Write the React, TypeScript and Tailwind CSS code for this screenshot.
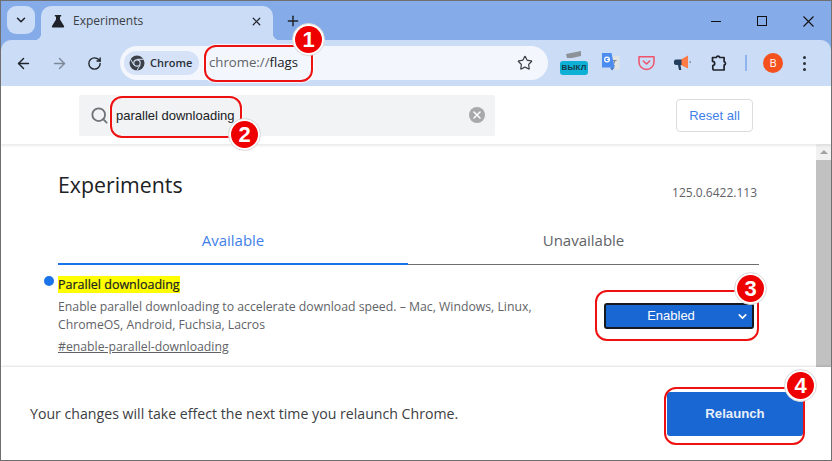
import { ArrowLeft, ArrowRight, RotateCw, Star, Search, Plus, X, ChevronDown } from "lucide-react";

const ui = "font-['Open_Sans','Noto_Sans',sans-serif]";

function Marker({ n, className }: { n: number; className: string }) {
  return (
    <div className={`absolute z-20 flex h-[33px] w-[33px] items-center justify-center rounded-full border-[1px] border-[#d8d8d8] bg-white ${className}`}>
      <div className="flex h-[27px] w-[27px] items-center justify-center rounded-full bg-[#ee0000] font-['Liberation_Sans',sans-serif] text-[22px] leading-none font-bold text-white">
        {n}
      </div>
    </div>
  );
}

function Callout({ className }: { className: string }) {
  return <div className={`absolute z-20 rounded-[12px] border-2 border-[#ee1111] shadow-[0_0_1px_1px_rgba(255,255,255,0.8)] ${className}`} />;
}

function Flask() {
  return (
    <svg width="14" height="14" viewBox="0 0 14 14" className="text-[#1f2329]">
      <path fill="currentColor" d="M3.800 1h6.400v1.400H9v3l4 6.500c.4.700 0 1.600-.9 1.600H1.900c-.9 0-1.300-.9-.9-1.600l4-6.500v-3H3.800z" />
    </svg>
  );
}

function ChromeLogo() {
  return (
    <svg width="16" height="16" viewBox="0 0 16 16">
      <circle cx="8" cy="8" r="7.5" fill="#3c4148" />
      <circle cx="8" cy="8" r="3.7" fill="#d5e2f8" />
      <circle cx="8" cy="8" r="2.6" fill="#3c4148" />
      <path d="M8 4.300h6.600M4.800 9.900 1.500 4.200M11.200 9.900l-3.300 5.700" stroke="#d5e2f8" strokeWidth="1" fill="none" />
    </svg>
  );
}

function VpnOff() {
  return (
    <div className="relative h-[24px] w-[28px]">
      <svg width="16" height="8" viewBox="0 0 16 8" className="absolute top-0 left-[6px]">
        <path fill="#8d9299" d="M0 3 15 0v5L6 7H1z" />
      </svg>
      <div className="absolute bottom-0 left-0 flex h-[14px] w-[28px] items-center justify-center rounded-[3px] bg-[#0fb0d6] font-['Liberation_Sans',sans-serif] text-[8px] leading-none font-bold tracking-[0.2px] text-[#123a4a]">
        ВЫКЛ
      </div>
    </div>
  );
}

function TranslateIcon() {
  return (
    <svg width="18" height="18" viewBox="0 0 18 18">
      <path fill="#dfe3e4" d="M7 3h10.500v13.500H9z" />
      <path fill="#7b8794" d="M10.500 7h4v1h-1.200c-.3 1.500-1 2.600-1.800 3.400l1.500 1-.5.800-1.800-1.200-1.200.9-.5-.8 1-.8-.8-1.400.8-.3.700 1.100c.7-.7 1.200-1.600 1.400-2.700h-1.600z" />
      <path fill="#4c8bf0" d="M0 0h9.500l3 14.500H0z" />
      <path fill="#3b6fc4" d="m8 14.500h4.500L10 17.500z" />
      <circle cx="5" cy="6.500" r="2.400" fill="none" stroke="#fff" strokeWidth="1.200" />
      <path fill="#fff" d="M5 6h3v1H5z" />
    </svg>
  );
}

function PocketIcon() {
  return (
    <svg width="17" height="16" viewBox="0 0 17 16" fill="none" stroke="#f0526a" strokeWidth="1.500">
      <path d="M1 1.800h15V7a7.500 7.500 0 0 1-15 0z" strokeLinejoin="round" />
      <path d="m5.300 6 3.200 3 3.200-3" strokeLinecap="round" strokeLinejoin="round" />
    </svg>
  );
}

function HornIcon() {
  return (
    <svg width="17" height="16" viewBox="0 0 17 16">
      <path fill="#ff7a45" d="M7 4.500 14 .5v13l-7-3.500z" />
      <path fill="#243f5e" d="M2.500 4.500H7.500V10H2.500a2.700 2.700 0 0 1 0-5.500z" />
      <path fill="#243f5e" d="M4 10h2.500l.8 5H5z" />
      <path fill="#555" d="M15.500 6.500h1.500v1h-1.500z" />
    </svg>
  );
}

function PuzzleIcon() {
  return (
    <svg width="17" height="17" viewBox="0 0 17 17" fill="none" stroke="#1f2329" strokeWidth="1.700" strokeLinejoin="round">
      <path d="M1.500 2.500H5.300a1.800 1.800 0 0 1 3.500 0h4.300v4.200a1.800 1.800 0 0 1 0 3.500v4.800H3.200c-.9 0-1.400-.6-1.400-1.400V10.500c1.700-.2 1.900-.8 1.900-2S3 6.300 1.500 6.300z" />
    </svg>
  );
}

function WindowButtons() {
  return (
    <div className="ml-auto flex h-[30px] text-[#111]">
      <div className="flex w-[46px] items-center justify-center">
        <div className="h-px w-[10px] bg-[#111]" />
      </div>
      <div className="flex w-[46px] items-center justify-center">
        <div className="h-[10px] w-[10px] border border-[#111]" />
      </div>
      <div className="flex w-[46px] items-center justify-center">
        <svg width="11" height="11" viewBox="0 0 11 11" stroke="currentColor" strokeWidth="1.100">
          <path d="m.5.5 10 10M10.500.5l-10 10" />
        </svg>
      </div>
    </div>
  );
}

function Tabstrip() {
  return (
    <div className="flex h-[39px] shrink-0 bg-[#85ace9] pt-[5px] pl-[6px]">
      <div className="flex h-[28px] w-[28px] items-center justify-center rounded-[9px] bg-[#cbdcf6]">
        <ChevronDown size={14} strokeWidth={2.600} className="text-[#1f2329]" />
      </div>
      <div className="relative ml-[6px] flex h-[34px] w-[232px] items-center rounded-t-[10px] bg-[#cbdcf6] pr-[10px] pb-[4px] pl-[10px]">
        <div className="absolute bottom-0 left-[-7px] h-[7px] w-[7px] bg-[radial-gradient(circle_at_0_0,#85ace9_7px,#cbdcf6_7.500px)]" />
        <div className="absolute right-[-7px] bottom-0 h-[7px] w-[7px] bg-[radial-gradient(circle_at_100%_0,#85ace9_7px,#cbdcf6_7.500px)]" />
        <Flask />
        <span className={`ml-[8px] flex-1 text-[12px] text-[#3a3f46] ${ui}`}>Experiments</span>
        <X size={13} strokeWidth={2.200} className="text-[#1f2329]" />
      </div>
      <div className="ml-[12px] flex h-[30px] items-center">
        <Plus size={16} strokeWidth={2.200} className="text-[#1f2329]" />
      </div>
      <WindowButtons />
    </div>
  );
}

function Toolbar() {
  return (
    <div className="flex h-[46px] shrink-0 items-center rounded-t-[10px] bg-[#cbdcf6] pr-[8px] pl-[14px] [box-shadow:0_1px_0_#a3aec4]">
      <ArrowLeft size={17} strokeWidth={2} className="text-[#1f2329]" />
      <ArrowRight size={17} strokeWidth={2} className="ml-[19px] text-[#7d8796]" />
      <RotateCw size={15} strokeWidth={2.200} className="ml-[19px] text-[#1f2329]" />
      <div className="ml-[18px] flex h-[34px] w-[428px] items-center rounded-full bg-[#f3f6fc] pr-[15px] pl-[4px]">
        <div className="flex h-[24px] w-[75px] items-center gap-[5px] rounded-full bg-[#d5e2f8] pl-[5px]">
          <ChromeLogo />
          <span className={`text-[11px] font-semibold text-[#2b3038] ${ui}`}>Chrome</span>
        </div>
        <span className="ml-[10px] flex-1 font-['Open_Sans',sans-serif] text-[13.200px] text-[#5f6368]">
          chrome://<span className="text-[#202124]">flags</span>
        </span>
        <Star size={16} strokeWidth={1.800} className="text-[#3c4148]" />
      </div>
      <div className="ml-[12px]"><VpnOff /></div>
      <div className="ml-[14px] -mt-[2px]"><TranslateIcon /></div>
      <div className="ml-[18px]"><PocketIcon /></div>
      <div className="ml-[19px]"><HornIcon /></div>
      <div className="ml-[20px]"><PuzzleIcon /></div>
      <div className="ml-[17px] h-[16px] w-[2px] bg-[#8fb3ec]" />
      <div className={`ml-[16px] flex h-[20px] w-[20px] items-center justify-center rounded-full bg-[#f4511e] text-[11px] text-white ${ui}`}>
        В
      </div>
      <div className="ml-[20px] flex flex-col gap-[3px]">
        <div className="h-[3px] w-[3px] rounded-full bg-[#2b3038]" />
        <div className="h-[3px] w-[3px] rounded-full bg-[#2b3038]" />
        <div className="h-[3px] w-[3px] rounded-full bg-[#2b3038]" />
      </div>
    </div>
  );
}

function SearchHeader() {
  return (
    <div className="relative z-10 flex h-[58px] shrink-0 items-center bg-white pr-[78px] pl-[78px] shadow-[0_2px_2px_rgba(0,0,0,0.08)]">
      <div className="flex h-[41px] w-[416px] items-center rounded-[2px] bg-[#f1f3f4] pr-[10px] pl-[11px]">
        <Search size={19} strokeWidth={2.300} className="text-[#6f7377]" />
        <span className="ml-[7px] flex-1 pt-[1px] font-['Liberation_Sans',sans-serif] text-[13px] text-[#202124]">parallel downloading</span>
        <div className="flex h-[16px] w-[16px] items-center justify-center rounded-full bg-[#a8a9aa]">
          <X size={12} strokeWidth={3} className="text-white" />
        </div>
      </div>
      <div className="ml-auto flex h-[33px] w-[77px] items-center justify-center rounded-[4px] border border-[#dadce0] pt-[1px] font-['Liberation_Sans',sans-serif] text-[13px] text-[#3f7fe8]">
        Reset all
      </div>
    </div>
  );
}

function FlagList() {
  return (
    <div className="flex min-h-0 flex-1 overflow-hidden">
      <div className={`flex-1 pt-[27px] pr-[57px] pl-[57px] ${ui}`}>
        <div className="flex items-start justify-between">
          <h1 className="text-[21.300px] leading-[28px] text-[#202124]">Experiments</h1>
          <span className="mt-[14px] mr-[2px] text-[12px] leading-[16px] text-[#5f6368]">125.0.6422.113</span>
        </div>
        <div className="mt-[27px] flex border-b border-[#6d6f73]">
          <div className="-mb-px w-[350px] border-b-2 border-[#1a73e8] pt-[2px] pb-[13px] text-center text-[15px] leading-[20px] text-[#3f7fe8]">
            Available
          </div>
          <div className="flex-1 pt-[2px] pb-[13px] text-center text-[15px] leading-[20px] text-[#5f6368]">Unavailable</div>
        </div>
        <div className="mt-[6px] flex justify-between">
          <div className="relative w-[500px]">
            <div className="absolute top-[5px] left-[-14px] h-[10px] w-[10px] rounded-full bg-[#1a73e8]" />
            <div>
              <span className="bg-[#ffff00] text-[12.500px] leading-[17px] font-normal text-[#202124] [-webkit-text-stroke:0.2px_#202124]">Parallel downloading</span>
            </div>
            <p className="mt-[3px] text-[12.250px] leading-[18px] text-[#5f6368]">
              Enable parallel downloading to accelerate download speed. – Mac, Windows, Linux, ChromeOS, Android, Fuchsia, Lacros
            </p>
            <div className="mt-[4px] text-[12.250px] leading-[18px] text-[#5f6368] underline">#enable-parallel-downloading</div>
          </div>
          <div className="relative mt-[32px] mr-[5px] flex h-[26px] w-[150px] items-center justify-center rounded-[3px] border-2 border-[#16191d] bg-[#1967d2] pr-[16px] font-['Liberation_Sans',sans-serif] text-[13px] font-medium text-white">
            Enabled
            <ChevronDown size={13} strokeWidth={3} className="absolute right-[3px]" />
          </div>
        </div>
      </div>
      <div className="flex w-[15px] shrink-0 flex-col bg-[#f1f1f1]">
        <div className="flex h-[16px] items-center justify-center">
          <div className="h-0 w-0 border-x-[4px] border-b-[4px] border-x-transparent border-b-[#a3a3a3]" />
        </div>
        <div className="flex-1 bg-[#c1c1c1]" />
      </div>
    </div>
  );
}

function Footer() {
  return (
    <div className={`relative z-10 flex h-[93px] shrink-0 items-center justify-between bg-white pr-[28px] pl-[29px] shadow-[0_-1px_2px_rgba(0,0,0,0.12)] ${ui}`}>
      <span className="text-[14.150px] text-[#3c4043]">Your changes will take effect the next time you relaunch Chrome.</span>
      <div className="mt-[1px] flex h-[44px] w-[136px] items-center justify-center rounded-[3px] bg-[#1967d2] font-['Liberation_Sans',sans-serif] text-[13.200px] font-bold text-[#e8eefa]">
        Relaunch
      </div>
    </div>
  );
}

export default function App() {
  return (
    <div className="relative flex h-[461px] w-[832px] flex-col overflow-hidden border border-[#6f6f6f] bg-[#85ace9]">
      <Tabstrip />
      <Toolbar />
      <div className="flex min-h-0 flex-1 flex-col bg-white">
        <SearchHeader />
        <FlagList />
        <Footer />
      </div>
      <Callout className="top-[44px] left-[203px] h-[37px] w-[109px]" />
      <Callout className="top-[95px] left-[109px] h-[42px] w-[132px]" />
      <Callout className="top-[289px] left-[594px] h-[51px] w-[164px]" />
      <Callout className="top-[386px] left-[663px] h-[58px] w-[141px]" />
      <Marker n={1} className="top-[22px] left-[291px]" />
      <Marker n={2} className="top-[117px] left-[227px]" />
      <Marker n={3} className="top-[271px] left-[733px]" />
      <Marker n={4} className="top-[368px] left-[783px]" />
    </div>
  );
}
